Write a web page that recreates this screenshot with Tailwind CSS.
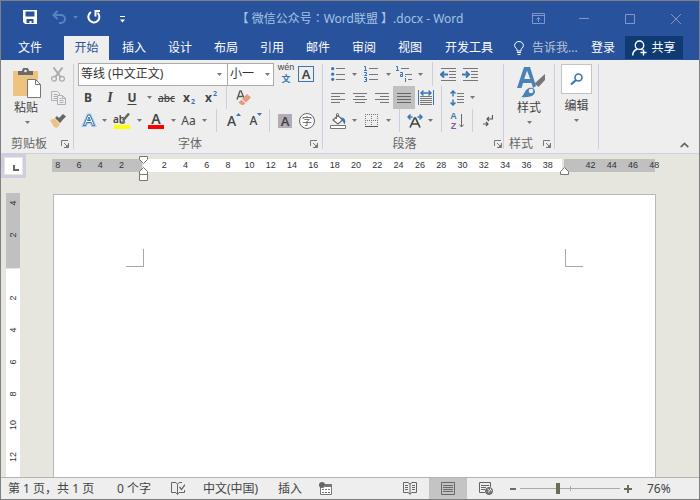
<!DOCTYPE html>
<html lang="zh-CN">
<head>
<meta charset="utf-8">
<meta name="viewport" content="width=device-width, initial-scale=1">
<title>Word</title>
<script src="https://cdn.jsdelivr.net/npm/@tailwindcss/browser@4"></script>
</head>
<body class="flex h-screen flex-col overflow-hidden border border-[#808080] bg-[#e6e6de] font-['Noto_Sans','Noto_Sans_CJK_SC',sans-serif] text-[12px] leading-4 text-[#444]">

<!-- Shared symbols -->
<svg class="hidden">
  <symbol id="caret" viewBox="0 0 5 3"><path d="M0 0h5L2.500 3z" fill="currentColor"/></symbol>
  <symbol id="launcher" viewBox="0 0 8 8"><path d="M.5 6V.5H7M3 3l3.500 3.500M7.500 3v4.500H3" fill="none" stroke="#777"/><path d="M7.500 4v3.500H4z" fill="#777"/></symbol>
</svg>

<header class="bg-[#28529b] text-white">
  <div class="grid h-[35px] grid-cols-[1fr_auto_1fr] items-center">
    <div class="flex h-8 items-center self-start">
      <button aria-label="保存" class="ml-[17px] flex w-6 justify-center"><svg class="h-[14px] w-[14px]" viewBox="0 0 14 14"><path d="M0 0h14v14H2l-2-2z" fill="#fff"/><path d="M2.500 1.500h9v5h-9zM3.500 9h7v4h-2v-2h-2v2h-3z" fill="#28529b"/></svg></button>
      <button aria-label="撤消" class="ml-1 flex w-[26px] justify-center text-[#5585bd]"><svg class="h-[14px] w-[15px]" viewBox="0 0 15 14"><path d="M1.500 5H9a4 4 0 0 1 0 8H7M5.500 1l-4 4 4 4" fill="none" stroke="currentColor" stroke-width="2"/></svg></button>
      <button aria-label="撤消选项" class="flex w-[6px] justify-center text-[#5585bd]"><svg class="h-[3px] w-[5px]"><use href="#caret"/></svg></button>
      <button aria-label="恢复" class="ml-1 flex w-6 justify-center"><svg class="h-[14px] w-[14px]" viewBox="0 0 14 14"><path d="M4 2.200A5.500 5.500 0 1 0 10.500 2.800" fill="none" stroke="#fff" stroke-width="2"/><path d="M7.500 1H13M8.500 1v5.500" fill="none" stroke="#fff" stroke-width="2"/></svg></button>
      <button aria-label="自定义快速访问工具栏" class="ml-1 flex w-6 justify-center"><svg class="mt-1 h-[7px] w-[5px]" viewBox="0 0 5 7"><path d="M0 .5h5" stroke="#fff"/><path d="M0 3.500h5L2.500 6.500z" fill="#fff"/></svg></button>
    </div>
    <h1 class="whitespace-nowrap text-[#a5c3e2]">【 微信公众号<span class="font-['Noto_Sans_CJK_TC']" lang="zh-TW">：</span>Word联盟 】.docx - Word</h1>
    <div class="flex h-8 items-center justify-end text-[#8495c8]">
      <button aria-label="功能区显示选项" class="flex w-[46px] justify-center"><svg class="h-[11px] w-[13px]" viewBox="0 0 13 11" fill="none" stroke="currentColor"><path d="M.5.5h12v10H.5zM.5 2.500h12M6.500 9V4.500M4.500 6.500l2-2 2 2"/></svg></button>
      <button aria-label="最小化" class="flex w-[46px] justify-center"><svg class="h-[11px] w-[10px]" viewBox="0 0 10 11"><path d="M0 5.500h10" stroke="currentColor"/></svg></button>
      <button aria-label="最大化" class="flex w-[46px] justify-center"><svg class="h-[10px] w-[10px]" viewBox="0 0 10 10"><path d="M.5.5h9v9h-9z" fill="none" stroke="currentColor"/></svg></button>
      <button aria-label="关闭" class="flex w-[46px] justify-center"><svg class="h-[10px] w-[10px]" viewBox="0 0 10 10"><path d="M0 0l10 10M10 0L0 10" stroke="currentColor"/></svg></button>
    </div>
  </div>
  <nav class="flex h-6 items-stretch whitespace-nowrap">
    <button class="w-[58px]">文件</button>
    <button class="ml-[5px] w-[45px] bg-[#eee] text-[#28529b]">开始</button>
    <button class="ml-[2px] w-[46px]">插入</button>
    <button class="w-[46px]">设计</button>
    <button class="w-[46px]">布局</button>
    <button class="w-[46px]">引用</button>
    <button class="w-[46px]">邮件</button>
    <button class="w-[46px]">审阅</button>
    <button class="w-[46px]">视图</button>
    <button class="w-[72px]">开发工具</button>
    <button class="ml-[9px] flex items-center gap-2 text-[#b9c3d6]"><svg class="h-[14px] w-[10px]" viewBox="0 0 10 14" fill="none" stroke="#fff"><path d="M3 10V8.800C3 7.500.6 6.800.6 4.500a4.400 4 0 0 1 8.800 0C9.400 6.800 7 7.500 7 8.800V10zM3 11.500h4M3.500 13.400h3"/></svg>告诉我...</button>
    <button class="ml-auto px-[10px]">登录</button>
    <button class="mr-4 mb-px flex w-[58px] items-center justify-center gap-1 bg-[#103a72]"><svg class="h-4 w-[15px]" viewBox="0 0 15 16" fill="none" stroke="#fff" stroke-width="1.400"><circle cx="7.500" cy="5.200" r="4.200"/><path d="M.7 15.500c0-3.300 2-5.400 4.500-6.500M9 9l1.500 1M11.500 9.500v6M8.500 12.500h6"/></svg>共享</button>
  </nav>
</header>

<section aria-label="功能区" class="flex h-[94px] shrink-0 border-b border-[#cfcde0] bg-[#eee]">

  <!-- Clipboard -->
  <div class="flex w-[72px] flex-col pt-[2px]">
    <div class="flex h-[70px] shrink-0">
      <button class="flex w-[46px] flex-col items-center pt-[6px] pl-[6px]">
        <svg class="h-[31px] w-[29px] shrink-0" viewBox="0 0 29 31"><path d="M0 3h25v25H0z" fill="#eec37f"/><path d="M5 7V3h4a3.500 3.500 0 0 1 7 0h4v4z" fill="#6a6a6a"/><circle cx="12.500" cy="3" r="1.300" fill="#eee"/><path d="M14.500 11.500h8l5 5v13h-13z" fill="#fff" stroke="#777"/><path d="M22.500 11.500v5h5" fill="none" stroke="#777"/></svg>
        <span class="mt-[1px] self-start pl-[7px]">粘贴</span>
        <svg class="mt-[5px] ml-[18px] h-[3px] w-[5px] shrink-0 self-start text-[#777]"><use href="#caret"/></svg>
      </button>
      <div class="flex w-[22px] flex-col">
        <button aria-label="剪切" class="flex h-6 items-center justify-center"><svg class="h-[15px] w-[14px]" viewBox="0 0 14 15" fill="none" stroke="#aeaab0"><path d="M2.500.5l7.500 10M11.500.5L4 10.500" stroke-width="2"/><circle cx="3" cy="11.700" r="2.400" stroke-width="1.300"/><circle cx="11" cy="11.700" r="2.400" stroke-width="1.300"/></svg></button>
        <button aria-label="复制" class="flex h-[23px] items-center justify-center"><svg class="h-[14px] w-[15px]" viewBox="0 0 15 14" fill="#eee" stroke="#b3adb6"><path d="M.5.500h6l2 2v7h-8zM2.500 3.500h4M2.500 5.500h4M2.500 7.500h4"/><path d="M6.500 4.500h5l3 3v6h-8zM11.500 4.500v3h3M8.500 7.500h2M8.500 9.500h4M8.500 11.500h4"/></svg></button>
        <button aria-label="格式刷" class="flex h-[23px] items-center justify-center"><svg class="h-[14px] w-4" viewBox="0 0 16 14"><path d="M0 6l4.500-1.500L10 10l-3 4-3-1z" fill="#eec37f"/><path d="M5 4l2-2 5 5-2 2z" fill="#666"/><path d="M8.500 4.500L13 0l3 2.500-4.500 4.500z" fill="#666"/></svg></button>
      </div>
    </div>
    <div class="flex h-[21px] items-center justify-between pt-[3px] pr-1 pl-[10px] text-[#666]"><span>剪贴板</span><button aria-label="剪贴板选项"><svg class="h-2 w-2"><use href="#launcher"/></svg></button></div>
  </div>
  <div class="my-1 w-px bg-[#cfcde0]"></div>

  <!-- Font -->
  <div class="flex w-[248px] flex-col pt-[2px]">
    <div class="flex h-6 shrink-0 items-center pl-1">
      <label class="relative block w-[150px]"><select aria-label="字体" class="block h-[23px] w-full appearance-none border border-[#ababab] bg-white pl-[2px] leading-5 text-[#333]"><option>等线 (中文正文)</option></select><svg class="pointer-events-none absolute top-[10px] right-[6px] h-[3px] w-[5px] text-[#777]"><use href="#caret"/></svg></label>
      <label class="relative -ml-px block w-[47px]"><select aria-label="字号" class="block h-[23px] w-full appearance-none border border-[#ababab] bg-white pl-[2px] leading-5 text-[#333]"><option>小一</option></select><svg class="pointer-events-none absolute top-[10px] right-1 h-[3px] w-[5px] text-[#777]"><use href="#caret"/></svg></label>
      <button aria-label="拼音指南" class="flex w-6 flex-col items-center"><span class="font-['Liberation_Sans',sans-serif] text-[9px] leading-[9px]">wén</span><span class="text-[9px] leading-[13px] font-bold text-[#3b76b3]">文</span></button>
      <button aria-label="字符边框" class="flex h-4 w-4 items-center justify-center border border-[#3b76b3] text-[13px] font-semibold">A</button>
    </div>
    <div class="flex h-[23px] shrink-0 items-center pl-[3px] font-bold">
      <button aria-label="加粗" class="w-[22px]">B</button>
      <button aria-label="倾斜" class="w-[22px] font-['Liberation_Serif',serif] text-[14px] italic">I</button>
      <button aria-label="下划线" class="w-[22px] underline underline-offset-2">U</button>
      <button aria-label="下划线选项" class="flex w-3 justify-center text-[#777]"><svg class="h-[3px] w-[5px]"><use href="#caret"/></svg></button>
      <button aria-label="删除线" class="w-[23px] text-[10px] font-medium line-through">abc</button>
      <button aria-label="下标" class="flex w-[22px] items-center justify-center gap-px">x<span class="mt-2 text-[7px] leading-[7px] text-[#3b76b3]">2</span></button>
      <button aria-label="上标" class="flex w-[22px] items-center justify-center gap-px">x<span class="mb-2 text-[7px] leading-[7px] text-[#3b76b3]">2</span></button>
      <div class="ml-1 h-full w-px bg-[#cfcde0]"></div>
      <button aria-label="清除所有格式" class="ml-[5px] flex w-[22px] justify-center"><svg class="h-4 w-[15px]" viewBox="0 0 15 16"><path d="M1 9.500L4 1h1l3 7M2 6.500h4.500" fill="none" stroke="#555" stroke-width="1.300"/><path d="M6 9L11 4l4 3.500-5 5z" fill="#e49b80"/><path d="M5.300 9.800l4 3.500-1.800 1.700H5.500L2.500 12.500z" fill="#e49b80"/></svg></button>
    </div>
    <div class="flex h-[23px] shrink-0 items-center pl-1 text-[#777]">
      <button aria-label="文本效果" class="flex w-[22px] justify-center"><svg class="h-[15px] w-4" viewBox="0 0 16 15"><path d="M2.500 12.500L7 2h2l4.500 10.500h-2L10.300 9.500H5.700L4.500 12.500zM6.500 7.500h3L8 4z" fill="#fff" stroke="#a8c8e4" stroke-width="3"/><path d="M2.500 12.500L7 2h2l4.500 10.500h-2L10.300 9.500H5.700L4.500 12.500zM6.500 7.500h3L8 4z" fill="#fff" stroke="#3b76b3"/></svg></button>
      <button aria-label="文本效果选项" class="flex w-2 justify-center"><svg class="h-[3px] w-[5px]"><use href="#caret"/></svg></button>
      <button aria-label="突出显示颜色" class="flex w-[27px] flex-col items-center"><span class="flex h-3 items-center text-[10px] leading-3 font-semibold text-[#444]">ab<svg class="-ml-[5px] h-[12px] w-[10px]" viewBox="0 0 10 12"><path d="M9 .5L3 7.500" stroke="#666" stroke-width="2.500"/><path d="M3.500 7L0 11h4l1.500-2z" fill="#777"/></svg></span><span class="h-1 w-4 bg-[#ffff00]"></span></button>
      <button aria-label="突出显示颜色选项" class="flex w-2 justify-center"><svg class="h-[3px] w-[5px]"><use href="#caret"/></svg></button>
      <button aria-label="字体颜色" class="flex w-[26px] flex-col items-center"><span class="h-3 text-[14px] leading-3 font-semibold text-[#444]">A</span><span class="h-1 w-4 bg-[#f00]"></span></button>
      <button aria-label="字体颜色选项" class="flex w-2 justify-center"><svg class="h-[3px] w-[5px]"><use href="#caret"/></svg></button>
      <button aria-label="更改大小写" class="w-[23px] text-[#444]">Aa</button>
      <button aria-label="更改大小写选项" class="flex w-2 justify-center"><svg class="h-[3px] w-[5px]"><use href="#caret"/></svg></button>
      <div class="ml-2 h-full w-px bg-[#cfcde0]"></div>
      <button aria-label="增大字号" class="ml-[6px] flex w-[22px] justify-center text-[14px] font-medium text-[#444]">A<svg class="h-[3px] w-[5px] rotate-180 text-[#3b76b3]"><use href="#caret"/></svg></button>
      <button aria-label="减小字号" class="flex w-[22px] justify-center text-[12px] font-medium text-[#444]">A<svg class="h-[3px] w-[5px] text-[#3b76b3]"><use href="#caret"/></svg></button>
      <div class="ml-[2px] h-full w-px bg-[#cfcde0]"></div>
      <button aria-label="字符底纹" class="ml-2 h-[14px] w-[14px] bg-[#b1acb5] text-[13px] leading-[14px] font-semibold text-[#444]">A</button>
      <button aria-label="带圈字符" class="ml-[7px] flex h-4 w-4 items-center justify-center rounded-full border border-[#666] bg-white text-[10px] leading-[10px] text-[#555]">字</button>
    </div>
    <div class="flex h-[21px] items-center pt-[3px] pr-1 text-[#666]"><span class="flex-1 pr-1 text-center">字体</span><button aria-label="字体选项"><svg class="h-2 w-2"><use href="#launcher"/></svg></button></div>
  </div>
  <div class="my-1 w-px bg-[#cfcde0]"></div>

  <!-- Paragraph -->
  <div class="flex w-[180px] flex-col pt-[2px] text-[#777]">
    <div class="flex h-6 shrink-0 items-center pl-[3px]">
      <button aria-label="项目符号" class="flex w-6 justify-center"><svg class="h-[14px] w-[14px]" viewBox="0 0 14 14"><path d="M5 1.500h9M5 7.500h9M5 12.500h9" stroke="#777"/><g fill="#3b76b3"><circle cx="1.700" cy="1.700" r="1.600"/><circle cx="1.700" cy="7.200" r="1.600"/><circle cx="1.700" cy="12.300" r="1.600"/></g></svg></button>
      <button aria-label="项目符号选项" class="flex w-2 justify-center"><svg class="h-[3px] w-[5px]"><use href="#caret"/></svg></button>
      <button aria-label="编号" class="flex w-[26px] justify-center"><svg class="h-4 w-[14px]" viewBox="0 0 14 16"><path d="M5 2.500h9M5 8.500h9M5 13.500h9" stroke="#777"/><path d="M0 .5h1.500V5M0 4.500h3M0 6.500h2.500v1.500L.5 9.500H3M0 11.500h2.500v4H0M1 13.500h1.500" fill="none" stroke="#3b76b3"/></svg></button>
      <button aria-label="编号选项" class="flex w-2 justify-center"><svg class="h-[3px] w-[5px]"><use href="#caret"/></svg></button>
      <button aria-label="多级列表" class="flex w-6 justify-center"><svg class="h-4 w-4" viewBox="0 0 16 16"><path d="M5 2.500h8M9 8.500h7M12 13.500h4" stroke="#777"/><path d="M0 .5h1.500V5M0 4.500h3M4 6.500h2.500v4H4.500V8.500h2M9.500 12v4M9.500 10v1" fill="none" stroke="#3b76b3"/></svg></button>
      <button aria-label="多级列表选项" class="flex w-2 justify-center"><svg class="h-[3px] w-[5px]"><use href="#caret"/></svg></button>
      <div class="ml-2 h-full w-px bg-[#cfcde0]"></div>
      <button aria-label="减少缩进量" class="ml-1 flex w-[22px] justify-center"><svg class="h-[13px] w-4" viewBox="0 0 16 13"><path d="M1 .5h15M9 3.500h7M9 6.500h7M9 9.500h7M1 12.500h15" stroke="#777"/><path d="M8 6.500H1M4 3.500l-3 3 3 3" fill="none" stroke="#3b76b3" stroke-width="2"/></svg></button>
      <button aria-label="增加缩进量" class="flex w-[22px] justify-center"><svg class="h-[13px] w-4" viewBox="0 0 16 13"><path d="M1 .5h15M9 3.500h7M9 6.500h7M9 9.500h7M1 12.500h15" stroke="#777"/><path d="M0 6.500h7M4 3.500l3 3-3 3" fill="none" stroke="#3b76b3" stroke-width="2"/></svg></button>
    </div>
    <div class="flex h-[23px] shrink-0 items-center pl-1">
      <button aria-label="左对齐" class="flex w-[22px] justify-center"><svg class="h-[10px] w-[14px]" viewBox="0 0 14 10" stroke="#777"><path d="M0 .5h14M0 3.500h9M0 6.500h14M0 9.500h9"/></svg></button>
      <button aria-label="居中" class="flex w-[22px] justify-center"><svg class="h-[10px] w-[14px]" viewBox="0 0 14 10" stroke="#777"><path d="M0 .5h14M2 3.500h10M0 6.500h14M2 9.500h10"/></svg></button>
      <button aria-label="右对齐" class="flex w-[22px] justify-center"><svg class="h-[10px] w-[14px]" viewBox="0 0 14 10" stroke="#777"><path d="M0 .5h14M5 3.500h9M0 6.500h14M5 9.500h9"/></svg></button>
      <button aria-label="两端对齐" aria-pressed="true" class="flex h-full w-[22px] items-center justify-center bg-[#c0c0c0]"><svg class="h-[10px] w-[14px]" viewBox="0 0 14 10" stroke="#666"><path d="M0 .5h14M0 3.500h14M0 6.500h14M0 9.500h14"/></svg></button>
      <button aria-label="分散对齐" class="flex w-[22px] justify-center"><svg class="h-[15px] w-4" viewBox="0 0 16 15" fill="none"><path d="M2 6.500h12M2 8.500h12M2 10.500h12M2 12.500h12M2 14.500h12" stroke="#777"/><path d="M.5 0v15M15.500 0v15" stroke="#3b76b3"/><path d="M2.500 3h11M5.500.5L3 3l2.500 2.500M10.500.5L13 3l-2.500 2.500" stroke="#3b76b3" stroke-width="1.400"/></svg></button>
      <div class="ml-1 h-full w-px bg-[#cfcde0]"></div>
      <button aria-label="行和段落间距" class="ml-1 flex w-[22px] justify-center"><svg class="h-4 w-[14px]" viewBox="0 0 14 16" fill="none"><path d="M7 3.500h7M7 6.500h7M7 9.500h7M7 12.500h7" stroke="#777"/><path d="M3 1v5.500M.5 3.500L3 1l2.500 2.500M3 9.500V15M.5 12.500L3 15l2.500-2.500" stroke="#3b76b3" stroke-width="1.500"/></svg></button>
      <button aria-label="行距选项" class="flex w-2 justify-center"><svg class="h-[3px] w-[5px]"><use href="#caret"/></svg></button>
    </div>
    <div class="flex h-[23px] shrink-0 items-center pl-[3px]">
      <button aria-label="底纹" class="flex w-6 justify-center"><svg class="h-4 w-4" viewBox="0 0 16 16"><path d="M3 7l5-4.500 4.500 4.500L8 11z" fill="#fff" stroke="#666" stroke-width="1.200"/><path d="M6.500 6V1.500a1 1 0 0 1 2 0V4" fill="none" stroke="#666"/><path d="M11 4.500c3.500 0 5.500 3 3.500 7-1-1-.8-3-2.500-4z" fill="#3b76b3"/><path d="M.5 12.500h15v3H.5z" fill="#fff" stroke="#777"/></svg></button>
      <button aria-label="底纹选项" class="flex w-2 justify-center"><svg class="h-[3px] w-[5px]"><use href="#caret"/></svg></button>
      <button aria-label="边框" class="flex w-[26px] justify-center"><svg class="h-[13px] w-[13px]" viewBox="0 0 13 13" stroke="#777"><path d="M0 .5h13M0 6.500h13M.5 0v11M6.500 0v11M12.500 0v11" stroke-dasharray="1 1"/><path d="M0 12.500h13" stroke="#555"/></svg></button>
      <button aria-label="边框选项" class="flex w-2 justify-center"><svg class="h-[3px] w-[5px]"><use href="#caret"/></svg></button>
      <div class="ml-[7px] h-full w-px bg-[#cfcde0]"></div>
      <button aria-label="中文版式" class="ml-1 flex w-[22px] justify-center"><svg class="h-[14px] w-4" viewBox="0 0 16 14" fill="none"><path d="M3 13.500L7.500 4h1L13 13.500M5 10h6" stroke="#444" stroke-width="1.700"/><path d="M5.500 3H1M3.500.5L1 3l2.500 2.500M10.500 3H15M12.500.5L15 3l-2.500 2.500" stroke="#3b76b3" stroke-width="1.500"/></svg></button>
      <button aria-label="中文版式选项" class="flex w-2 justify-center"><svg class="h-[3px] w-[5px]"><use href="#caret"/></svg></button>
      <div class="ml-[7px] h-full w-px bg-[#cfcde0]"></div>
      <button aria-label="排序" class="ml-1 flex w-[22px] items-center justify-center gap-[2px]"><span class="flex flex-col font-['Liberation_Sans',sans-serif] text-[9px] leading-[10px] font-bold"><span class="text-[#3b76b3]">A</span><span class="text-[#8e55a4]">Z</span></span><svg class="h-[14px] w-[5px]" viewBox="0 0 5 14"><path d="M2.500 0v13M.3 10.500l2.200 2.500 2.200-2.500" fill="none" stroke="#666"/></svg></button>
      <div class="ml-1 h-full w-px bg-[#cfcde0]"></div>
      <button aria-label="显示编辑标记" class="ml-1 flex w-[22px] justify-center"><svg class="h-3 w-[10px]" viewBox="0 0 10 12" fill="none" stroke="#555" stroke-width="1.200"><path d="M9.500 0v4H4M6 2L4 4l2 2M0 9h5M3 7l2 2-2 2"/></svg></button>
    </div>
    <div class="flex h-[21px] items-center pt-[3px] pr-px text-[#666]"><span class="flex-1 pr-2 text-center">段落</span><button aria-label="段落选项"><svg class="h-2 w-2"><use href="#launcher"/></svg></button></div>
  </div>
  <div class="my-1 w-px bg-[#cfcde0]"></div>

  <!-- Styles -->
  <div class="flex w-[50px] flex-col pt-[2px]">
    <button class="flex h-[70px] shrink-0 flex-col items-center pt-[5px]">
      <svg class="ml-1 h-8 w-7 shrink-0" viewBox="0 0 28 32"><path d="M0 21L7 0h6L19 19l-3 2-1.500-5H6L4.500 21zM7.200 12h6L10 3.500z" fill="#4a82b8"/><path d="M28 7v6l-6.500 7-4-3.500z" fill="#777"/><path d="M4 30c3-1 3-7 8-9 3-1 6 .5 6 3.500 0 4-5 6.500-14 5.500z" fill="#4a82b8"/><circle cx="14" cy="24" r="2.300" fill="#eee"/></svg>
      <span class="mt-[1px]">样式</span>
      <svg class="mt-[5px] h-[3px] w-[5px] shrink-0 text-[#777]"><use href="#caret"/></svg>
    </button>
    <div class="flex h-[21px] items-center justify-between pt-[3px] pr-[3px] pl-[5px] text-[#666]"><span>样式</span><button aria-label="样式选项"><svg class="h-2 w-2"><use href="#launcher"/></svg></button></div>
  </div>
  <div class="my-1 w-px bg-[#cfcde0]"></div>

  <!-- Editing -->
  <div class="flex w-[43px] flex-col pt-1">
    <button class="flex flex-col items-center">
      <span class="flex h-[30px] w-[31px] items-center justify-center border border-[#c3c3c3] bg-white"><svg class="h-3 w-[13px]" viewBox="0 0 13 12" fill="none" stroke="#3b76b3"><circle cx="8.500" cy="4.500" r="3.500" stroke-width="1.600"/><path d="M6 7l-5 4.500" stroke-width="2.200"/></svg></span>
      <span class="mt-1">编辑</span>
      <svg class="mt-[5px] h-[3px] w-[5px] text-[#777]"><use href="#caret"/></svg>
    </button>
  </div>
  <div class="my-1 w-px bg-[#cfcde0]"></div>
  <button aria-label="折叠功能区" class="mt-auto mr-[10px] mb-[5px] ml-auto"><svg class="h-[6px] w-[9px]" viewBox="0 0 9 6"><path d="M.7 5.200L4.500 1.400l3.800 3.800" fill="none" stroke="#666" stroke-width="1.700"/></svg></button>
</section>

<main class="flex min-h-0 flex-1">
  <!-- Tab selector and vertical ruler -->
  <div class="flex w-[51px] shrink-0 flex-col items-start">
    <button aria-label="制表符" class="flex h-6 w-[25px] items-center justify-center bg-[#cfcde0]"><span class="flex h-[18px] w-[19px] items-center justify-center border border-[#e6e6de] bg-white"><svg class="mt-1 ml-1 h-[6px] w-[6px]" viewBox="0 0 6 6"><path d="M1 0v5h5" fill="none" stroke="#666" stroke-width="2"/></svg></span></button>
    <div class="mt-[15px] ml-[5px] flex min-h-0 w-[14px] flex-1 flex-col bg-[linear-gradient(#c0c0c0_75px,#e6e6de_75px,#e6e6de_76px,#fff_76px)] font-['Liberation_Sans',sans-serif] text-[9px]">
      <div class="-mt-[6px] mb-1 grid flex-1 auto-rows-fr place-items-center text-[#333]">
        <span class="-rotate-90">4</span><span class="-rotate-90">2</span><span></span><span class="-rotate-90">2</span><span class="-rotate-90">4</span><span class="-rotate-90">6</span><span class="-rotate-90">8</span><span class="-rotate-90">10</span><span class="-rotate-90">12</span>
      </div>
    </div>
  </div>
  <div class="flex min-w-0 flex-1 flex-col pr-11">
    <!-- Horizontal ruler -->
    <div class="relative mt-[5px] flex h-[13px] shrink-0 gap-px font-['Liberation_Sans',sans-serif] text-[9px] leading-[13px] text-[#333]">
      <div class="w-[90px] bg-[#c0c0c0]"></div>
      <div class="flex-1 bg-white"></div>
      <div class="ml-px w-[91px] bg-[#c0c0c0]"></div>
      <div class="absolute -right-[10px] -left-[5px] grid grid-flow-col auto-cols-[minmax(0,1fr)] text-center">
        <span>8</span><span>6</span><span>4</span><span>2</span><span></span><span>2</span><span>4</span><span>6</span><span>8</span><span>10</span><span>12</span><span>14</span><span>16</span><span>18</span><span>20</span><span>22</span><span>24</span><span>26</span><span>28</span><span>30</span><span>32</span><span>34</span><span>36</span><span>38</span><span></span><span>42</span><span>44</span><span>46</span><span>48</span>
      </div>
      <svg class="absolute -top-[3px] left-[87px] h-[25px] w-[9px]" viewBox="0 0 9 25" fill="#fff" stroke="#777"><path d="M.5.500h8v3l-4 4-4-4zM.5 18.500v-3l4-4 4 4v3zM.5 18.500h8v6h-8z"/></svg>
      <svg class="absolute top-2 right-[86px] h-2 w-[9px]" viewBox="0 0 9 8" fill="#fff" stroke="#777"><path d="M.5 7.500v-3l4-4 4 4v3z"/></svg>
    </div>
    <!-- Page -->
    <div class="mt-[22px] -mr-px ml-px flex flex-1 items-start justify-between border border-b-0 border-[#b9b9b9] bg-white px-[72px] pt-[54px]">
      <div class="h-[18px] w-[18px] border-r border-b border-[#aaa6ac]"></div>
      <div class="h-[18px] w-[18px] border-b border-l border-[#aaa6ac]"></div>
    </div>
  </div>
</main>

<footer class="flex h-[22px] shrink-0 items-center border-t border-[#b4b4ac] bg-[#eee] whitespace-nowrap">
  <button class="ml-[7px] w-[90px] text-left">第 1 页，共 1 页</button>
  <button class="ml-[19px] w-[36px] text-left">0 个字</button>
  <button aria-label="校对" class="ml-[18px]"><svg class="h-[13px] w-[14px]" viewBox="0 0 14 13" fill="none" stroke="#666"><path d="M6.500 12.500V2.500L5 .5H.5v10H5zM6.500 2.500L8 .5h3M6.500 12.500l1.500-2h5.500V8"/><path d="M8.500 5l2 2.500L14 2.500" stroke-width="1.300"/></svg></button>
  <button class="ml-[18px] w-[58px] text-left">中文(中国)</button>
  <button class="ml-[17px]">插入</button>
  <button aria-label="录制宏" class="ml-[17px]"><svg class="h-[13px] w-[13px]" viewBox="0 0 13 13"><path d="M1.500 2.500h11v10h-11z" fill="#fff" stroke="#777"/><path d="M6 2h7v3H6z" fill="#777"/><path d="M3 7.500h8M3 10.500h8" stroke="#777" stroke-dasharray="2 1"/><circle cx="3" cy="3" r="3" fill="#666"/></svg></button>
  <div class="ml-auto flex h-full items-center">
    <button aria-label="阅读视图" class="mr-3"><svg class="h-[13px] w-[14px]" viewBox="0 0 14 13" fill="none" stroke="#666"><path d="M7 2L5 .5H.5v10H5L7 12l2-1.500h4.500V.500H9zM7 2v10.500M2 3.500h3M2 5.500h3M2 7.500h3M9 3.500h3M9 5.500h3M9 7.500h3"/></svg></button>
    <button aria-label="页面视图" aria-pressed="true" class="flex h-full w-[38px] items-center justify-center bg-[#c4c4c4]"><svg class="h-[13px] w-[14px]" viewBox="0 0 14 13" fill="none" stroke="#666"><path d="M.5.500h13v12H.5zM2 3.500h10M2 5.500h10M2 7.500h10M2 9.500h10"/></svg></button>
    <button aria-label="Web 版式视图" class="ml-3"><svg class="h-[13px] w-[14px]" viewBox="0 0 14 13" fill="none" stroke="#666"><path d="M6 10.500H.5V.500h11V5M2 3.500h8M2 5.500h5M2 7.500h4"/><circle cx="10" cy="9" r="3.500" fill="#777"/><path d="M8.500 7l2 1.500-1 2M11.500 6.500v1.500l1.500 1" stroke="#eee"/></svg></button>
    <button aria-label="缩小" class="ml-[17px]"><svg class="h-2 w-[6px]" viewBox="0 0 6 8"><path d="M0 4h6" stroke="#6c6c58" stroke-width="2"/></svg></button>
    <div class="relative ml-1 flex h-[12px] w-[100px] items-center">
      <div class="absolute top-[3px] left-[50px] h-[5px] w-px bg-[#aaa]"></div>
      <input type="range" aria-label="显示比例" min="0" max="100" value="38" class="relative h-[11px] w-full appearance-none bg-[linear-gradient(#aaa,#aaa)] bg-[length:100%_1px] bg-center bg-no-repeat [&::-webkit-slider-thumb]:h-[11px] [&::-webkit-slider-thumb]:w-1 [&::-webkit-slider-thumb]:appearance-none [&::-webkit-slider-thumb]:bg-[#6c6c58]">
    </div>
    <button aria-label="放大" class="ml-1"><svg class="h-2 w-2" viewBox="0 0 8 8"><path d="M0 4h8M4 0v8" stroke="#6c6c58" stroke-width="2"/></svg></button>
    <button class="mr-[25px] ml-[15px] w-[27px] text-left">76%</button>
  </div>
</footer>
</body>
</html>
